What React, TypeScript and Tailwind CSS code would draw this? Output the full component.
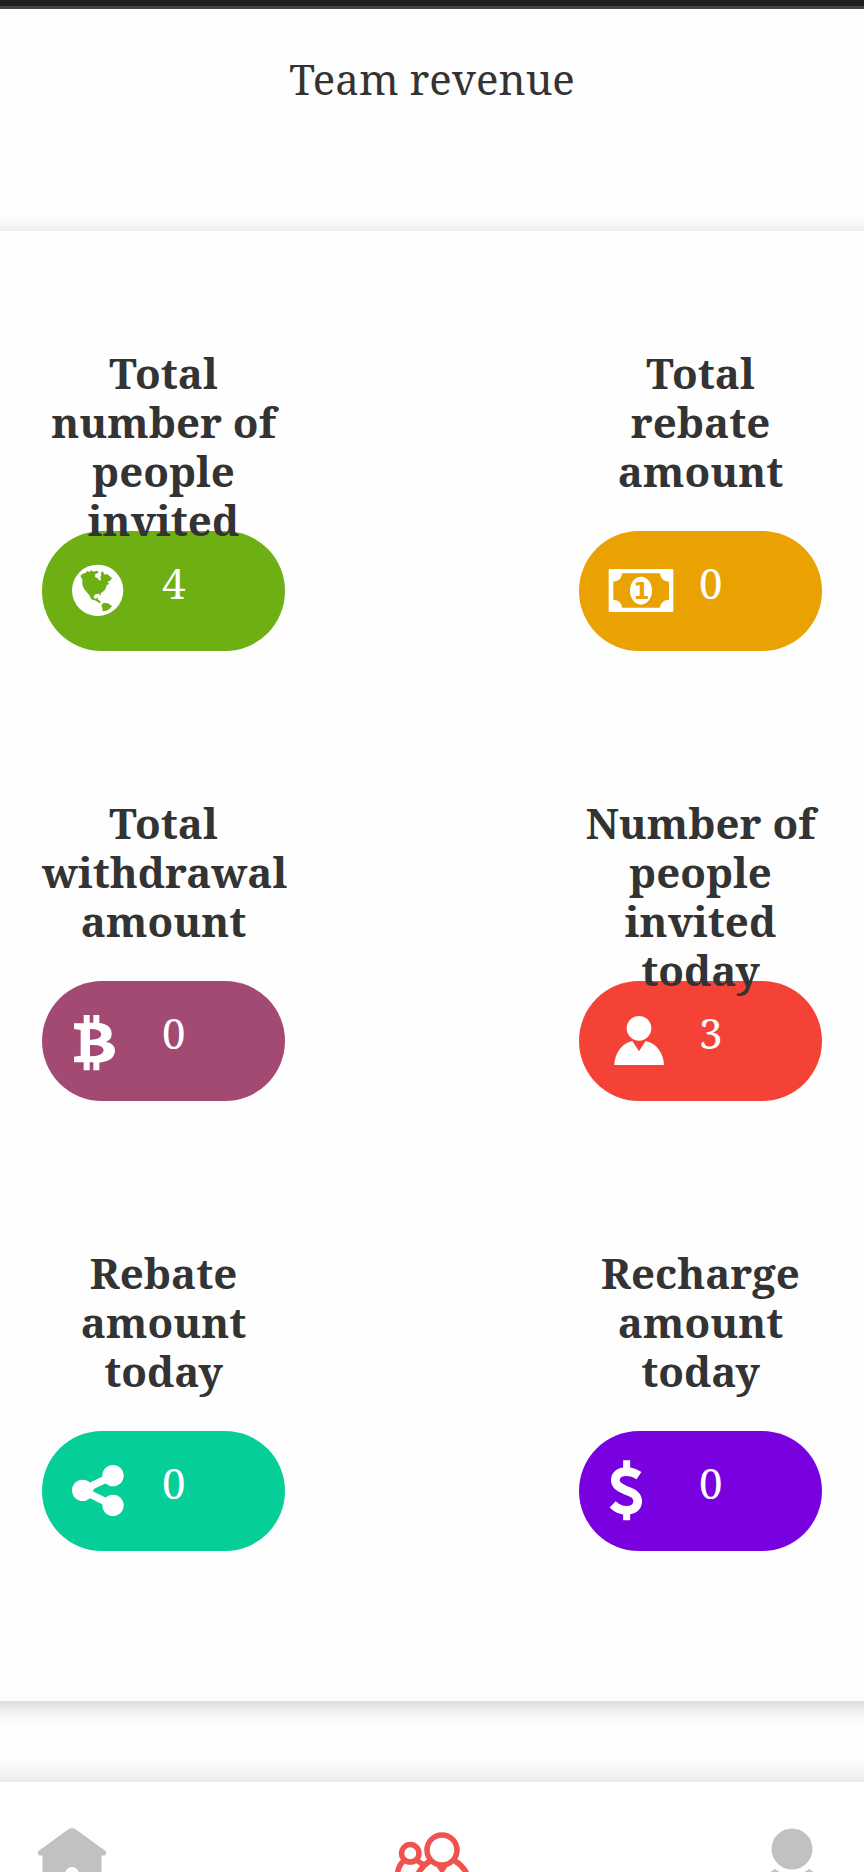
import React, { JSX } from 'react';

interface Stat {
    label: string;
    value: number;
    color: string;
    icon: JSX.Element;
}

function GlobeIcon(): JSX.Element {
    return (
        <svg viewBox="0 -9 216 216" className="size-18" fill="currentColor" aria-hidden="true">
            <circle cx="95" cy="97" r="77" />
            <g className="text-[#6eaf13]">
                <path d="M43 54L50 47 60 44 62 39 70 42 76 37 82 41 92 38 98 42 96 45 88 48 87 57 95 61 101 68 105 66 103 58 106 50 104 44 110 40 116 50 124 48 130 54 138 61 132 68 124 72 130 77 122 82 118 94 110 102 104 106 104 114 98 107 88 109 83 115 84 121 90 122 95 118 96 125 102 129 104 136 98 134 90 128 76 124 70 112 60 100 54 92 49 80 49 64z" />
                <path d="M106 142L112 135 124 135 138 144 131 152 122 158 110 160 109 150z" />
            </g>
        </svg>
    );
}

function CashIcon(): JSX.Element {
    return (
        <svg viewBox="-3 -15 216 216" className="size-18" fill="currentColor" aria-hidden="true">
            <path
                fillRule="evenodd"
                d="M18 27h186q4 0 4 4v121q0 4-4 4H18q-4 0-4-4V31q0-4 4-4zM54 40a26 24 0 0 1-26 25v54a26 24 0 0 1 26 24h114a26 24 0 0 1 27-24V65a26 24 0 0 1-27-25z"
            />
            <ellipse cx="111" cy="92" rx="33" ry="42" />
            <text x="112" y="117" textAnchor="middle" className="fill-[#eaa102] font-['DejaVu_Sans',sans-serif] text-[70px] font-bold">
                1
            </text>
        </svg>
    );
}

function BitcoinIcon(): JSX.Element {
    return (
        <svg viewBox="108 135 216 216" className="size-18" fill="currentColor" aria-hidden="true">
            <path
                fillRule="evenodd"
                d="M132 190h29v-25h18v23h11v-23h18v24q37 5 37 33 0 17-17 23 27 5 27 28-2 30-47 35v23h-18v-24h-11v24h-18v-24h-29v-17l20-3v-77l-20-3zM180 207v32q32 1 34-16-2-16-34-16zM180 255v34q39 0 41-18-1-18-41-16z"
            />
        </svg>
    );
}

function PersonIcon(): JSX.Element {
    return (
        <svg viewBox="129 645 216 216" className="size-18" fill="currentColor" aria-hidden="true">
            <circle cx="237" cy="715" r="37" />
            <path d="M163 825c1-35 22-65 54-72l20 31 20-31c33 7 54 37 55 72z" />
        </svg>
    );
}

function ShareIcon(): JSX.Element {
    return (
        <svg viewBox="108 105 216 216" className="size-18" fill="currentColor" aria-hidden="true">
            <path d="M249 167l-92 44 92 45" fill="none" stroke="currentColor" strokeWidth="22" />
            <circle cx="158" cy="211" r="32" />
            <circle cx="249" cy="167" r="32" />
            <circle cx="249" cy="256" r="32" />
        </svg>
    );
}

function DollarIcon(): JSX.Element {
    return (
        <svg viewBox="129 105 216 216" className="size-18" fill="none" stroke="currentColor" aria-hidden="true">
            <path d="M200 121v26M200 275v26" strokeWidth="21" />
            <path
                d="M237 167c-12-8-24-12-37-12-22 0-34 10-34 26 0 15 12 22 34 31 22 8 33 15 33 32 0 18-13 27-34 27-16 0-29-6-41-18"
                strokeWidth="26"
            />
        </svg>
    );
}

const stats: Stat[] = [
    { label: 'Total number of people invited', value: 4, color: 'bg-[#6eaf13]', icon: <GlobeIcon /> },
    { label: 'Total rebate amount', value: 0, color: 'bg-[#eaa102]', icon: <CashIcon /> },
    { label: 'Total withdrawal amount', value: 0, color: 'bg-[#a24a73]', icon: <BitcoinIcon /> },
    { label: 'Number of people invited today', value: 3, color: 'bg-[#f44336]', icon: <PersonIcon /> },
    { label: 'Rebate amount today', value: 0, color: 'bg-[#06ce98]', icon: <ShareIcon /> },
    { label: 'Recharge amount today', value: 0, color: 'bg-[#7901e0]', icon: <DollarIcon /> },
];

// Long labels run over the top edge of the pill, so the pill sits behind them
function StatCard({ label, value, color, icon }: Stat): JSX.Element {
    return (
        <div className="w-[243px]">
            <h2 className="h-[183px] text-center font-bold">{label}</h2>
            <div className={`relative -z-10 flex h-[120px] items-center rounded-full text-white ${color}`}>
                <div className="flex w-[120px] shrink-0 pl-6">{icon}</div>
                <span className="pb-[18px]">{value}</span>
            </div>
        </div>
    );
}

function HomeIcon(): JSX.Element {
    return (
        <svg viewBox="0 0 72 72" className="size-18" fill="currentColor" aria-hidden="true">
            <path
                fillRule="evenodd"
                d="M32 5.500q4-3 8 0L69.500 27q1 1 .5 3-.5 1.500-2 1.500h-2.500V70h-59V31.500H4q-1.500 0-2-1.500-.5-2 .5-3zM29 50v20h14V50a7 7 0 0 0-14 0z"
            />
        </svg>
    );
}

function TeamIcon(): JSX.Element {
    return (
        <svg viewBox="0 0 72 72" className="size-18 overflow-visible" fill="none" stroke="currentColor" strokeWidth="5.500" aria-hidden="true">
            <circle cx="46" cy="26" r="15" />
            <circle cx="14.300" cy="29.300" r="8.700" />
            <path d="M34 37C27 41 23 47 20 54v10h53V54c-3-7-7-13-14-17" />
            <path d="M9 36C3 40 1 46 1 58h18M20 36l8 5" />
            <path d="M40 40h12l-6 9z" fill="currentColor" strokeWidth="2" />
        </svg>
    );
}

function MineIcon(): JSX.Element {
    return (
        <svg viewBox="0 0 72 72" className="size-18" fill="currentColor" aria-hidden="true">
            <circle cx="36" cy="25" r="20.500" />
            <path d="M19 45q17 12 34 0 14 8 15 25H4q1-17 15-25z" />
        </svg>
    );
}

export default function App(): JSX.Element {
    return (
        <div className="isolate flex h-screen flex-col overflow-hidden bg-[#fefefe] font-['Noto_Serif','DejaVu_Serif_Condensed','DejaVu_Serif',serif] text-[42px] leading-[49px] text-[#333333]">
            <div className="h-[9px] shrink-0 border-b-3 border-[#444444] bg-[#202020]" />
            <header className="h-[222px] shrink-0 pt-[45px]">
                <h1 className="text-center">Team revenue</h1>
            </header>

            <main className="-mx-8 shrink-0 px-[74px] pt-[117px] pb-[150px] shadow-[0_4px_20px_rgba(0,0,0,0.2)]">
                <div className="grid grid-cols-[243px_243px] justify-between gap-y-[147px]">
                    {stats.map((stat) => (
                        <StatCard key={stat.label} {...stat} />
                    ))}
                </div>
            </main>

            <nav className="-mx-8 mt-[81px] flex min-h-0 flex-1 items-start justify-between bg-white px-8 text-[#c1c1c1] shadow-[0_0_30px_rgba(0,0,0,0.16)]">
                <a href="#home" aria-label="Home" className="flex w-36 justify-center pt-[42px]">
                    <HomeIcon />
                </a>
                <a href="#team" aria-label="Team" className="flex w-36 justify-center pt-[42px] text-[#ef5350]">
                    <TeamIcon />
                </a>
                <a href="#mine" aria-label="Mine" className="flex w-36 justify-center pt-[42px]">
                    <MineIcon />
                </a>
            </nav>
        </div>
    );
}
